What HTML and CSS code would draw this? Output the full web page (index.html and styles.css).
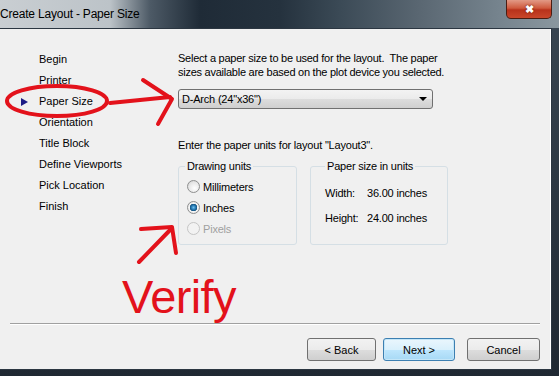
FILE: index.html
```html
<!DOCTYPE html>
<html lang="en">
<head>
  <meta charset="UTF-8">
  <title>Create Layout - Paper Size</title>
  <link rel="stylesheet" href="styles.css">
</head>
<body>
  <div class="window">
    <div class="titlebar">
      <span class="title">Create Layout - Paper Size</span>
      <div class="close">&#10006;</div>
    </div>

    <div class="client">
      <div class="main">
        <ul class="steps">
          <li class="step"><span class="marker"></span>Begin</li>
          <li class="step"><span class="marker"></span>Printer</li>
          <li class="step current"><span class="marker"></span>Paper Size</li>
          <li class="step"><span class="marker"></span>Orientation</li>
          <li class="step"><span class="marker"></span>Title Block</li>
          <li class="step"><span class="marker"></span>Define Viewports</li>
          <li class="step"><span class="marker"></span>Pick Location</li>
          <li class="step"><span class="marker"></span>Finish</li>
        </ul>

        <div class="content">
          <p class="desc">Select a paper size to be used for the layout.&nbsp; The paper<br>sizes available are based on the plot device you selected.</p>

          <div class="combo">
            <span>D-Arch (24"x36")</span>
            <span class="combo-arrow"></span>
          </div>

          <p class="units-text">Enter the paper units for layout "Layout3".</p>

          <div class="groups">
            <fieldset class="group group-units">
              <legend>Drawing units</legend>
              <div class="radio-row"><span class="radio"></span>Millimeters</div>
              <div class="radio-row"><span class="radio checked"></span>Inches</div>
              <div class="radio-row disabled"><span class="radio"></span>Pixels</div>
            </fieldset>
            <fieldset class="group group-size">
              <legend>Paper size in units</legend>
              <div class="size-row"><span class="size-label">Width:</span>36.00 inches</div>
              <div class="size-row"><span class="size-label">Height:</span>24.00 inches</div>
            </fieldset>
          </div>
        </div>
      </div>

      <div class="separator"></div>

      <div class="buttons">
        <button class="btn btn-back">&lt; Back</button>
        <button class="btn btn-next">Next &gt;</button>
        <button class="btn btn-cancel">Cancel</button>
      </div>
    </div>

    <!-- hand drawn markup on top of the screenshot -->
    <svg class="markup" width="559" height="376" viewBox="0 0 559 376">
      <g fill="none" stroke="#e3121b" stroke-width="4" stroke-linecap="round" stroke-linejoin="round">
        <ellipse cx="57" cy="101" rx="50" ry="15"/>
        <path d="M110 103 L170 97"/>
        <path d="M143 80 L172 99 L158 124"/>
        <path d="M139 262 L172 228"/>
        <path d="M141 229 L172 227 L176 253"/>
      </g>
      <text x="122" y="313" class="verify">Verify</text>
    </svg>
  </div>
</body>
</html>
```

FILE: styles.css
```css
body {
  margin: 0;
  font-family: "Liberation Sans", Arial, sans-serif;
  font-size: 11px;
  color: #000;
}
.window {
  position: relative;
  width: 559px;
  height: 376px;
  display: flex;
  flex-direction: column;
  background: linear-gradient(to bottom, #3a4753, #1f2832);
  overflow: hidden;
}
.titlebar {
  height: 28px;
  display: flex;
  align-items: flex-start;
  background: linear-gradient(to right, #c9ced2 0, #bcc3c8 110px, #4d5a66 150px, #1f2b37 200px, #25323e 280px, #3b4a56 340px, #5a6772 420px, #76848e 500px, #8a979f 559px);
}
.title {
  font-size: 12px;
  line-height: 28px;
  letter-spacing: -0.2px;
  padding-right: 12px;
}
.close {
  margin-left: auto;
  margin-right: 7px;
  width: 46px;
  height: 19px;
  box-sizing: border-box;
  border: 1px solid #4a1d12;
  border-top: none;
  border-radius: 0 0 5px 5px;
  background: linear-gradient(to bottom, #e29a86 0, #cf5a3e 45%, #b8321b 55%, #c9462a 100%);
  color: #fff;
  font-size: 11px;
  font-weight: bold;
  text-align: center;
  line-height: 18px;
  text-shadow: 0 0 2px #5a1000;
}
.client {
  flex: 1;
  margin: 0 7px 6px 0;
  background: #f0f0f0;
  border: 1px solid #2b3641;
  border-left: none;
  box-shadow: inset -1px 0 0 #ffffff;
  display: flex;
  flex-direction: column;
}
.main {
  height: 294px;
  display: flex;
}
.steps {
  list-style: none;
  margin: 0;
  padding: 20px 0 0;
  width: 178px;
}
.step {
  height: 21px;
  line-height: 21px;
  display: flex;
  align-items: center;
}
.marker {
  width: 39px;
  flex-shrink: 0;
}
.current .marker::before {
  content: "";
  display: block;
  margin-left: 21px;
  width: 0;
  height: 0;
  border-top: 4px solid transparent;
  border-bottom: 4px solid transparent;
  border-left: 7px solid #1c1c86;
}
.content {
  padding-top: 22px;
  flex: 1;
}
.desc {
  margin: 0;
  line-height: 14px;
  letter-spacing: -0.25px;
}
.combo {
  margin-top: 10px;
  width: 255px;
  height: 20px;
  box-sizing: border-box;
  border: 1px solid #707070;
  border-radius: 3px;
  background: linear-gradient(to bottom, #f3f3f3 0, #ebebeb 50%, #dddddd 51%, #cfcfcf 100%);
  display: flex;
  align-items: center;
  justify-content: space-between;
  padding: 0 5px 0 3px;
  letter-spacing: -0.2px;
}
.combo-arrow {
  width: 0;
  height: 0;
  border-left: 4px solid transparent;
  border-right: 4px solid transparent;
  border-top: 4px solid #000;
}
.units-text {
  margin: 29px 0 0;
  line-height: 14px;
  letter-spacing: -0.2px;
}
.groups {
  display: flex;
  gap: 13px;
  margin-top: 7px;
}
.group {
  margin: 0;
  padding: 0 0 0 6px;
  height: 86px;
  box-sizing: border-box;
  border: 1px solid #d5dfe5;
  border-radius: 3px;
  min-width: 0;
}
.group legend {
  padding: 0 2px;
  line-height: 14px;
  letter-spacing: -0.2px;
}
.group-units {
  width: 119px;
  padding-top: 3px;
}
.group-size {
  width: 138px;
  padding-top: 10px;
  padding-left: 14px;
}
.radio-row {
  height: 21px;
  display: flex;
  align-items: center;
  gap: 3px;
  letter-spacing: -0.2px;
}
.radio-row.disabled {
  color: #a0a0a0;
}
.radio {
  margin-left: 2px;
  width: 13px;
  height: 13px;
  box-sizing: border-box;
  border-radius: 50%;
  border: 1px solid #8e8f8f;
  background: radial-gradient(circle at 60% 65%, #ffffff 0, #e6e6e6 60%, #c8c8c8 100%);
}
.radio.checked {
  background: radial-gradient(circle at 50% 50%, #6cc0ee 0, #1e6ea8 2.5px, #14547f 3.5px, #f4f4f4 4px, #dcdcdc 100%);
}
.disabled .radio {
  border-color: #c5c5c5;
  background: #f2f2f2;
}
.size-row {
  height: 20px;
  line-height: 20px;
  display: flex;
  letter-spacing: -0.2px;
}
.size-row + .size-row {
  margin-top: 5px;
}
.size-label {
  width: 42px;
}
.separator {
  margin: 0 11px 0 10px;
  border-top: 1px solid #a0a0a0;
  border-bottom: 1px solid #ffffff;
}
.buttons {
  display: flex;
  justify-content: flex-end;
  padding: 13px 11px 0 0;
}
.btn {
  height: 23px;
  margin: 0;
  border: 1px solid #707070;
  border-radius: 3px;
  background: linear-gradient(to bottom, #f2f2f2 0, #ebebeb 50%, #dddddd 51%, #cfcfcf 100%);
  font-family: "Liberation Sans", Arial, sans-serif;
  font-size: 11px;
  color: #000;
  padding: 0;
}
.btn-back {
  width: 69px;
}
.btn-next {
  width: 72px;
  margin-left: 7px;
  border-color: #3c7fb1;
  background: linear-gradient(to bottom, #eaf6fd 0, #d9f0fc 50%, #bee6fd 51%, #a7d9f5 100%);
  box-shadow: inset 0 0 0 1px #c4e6f8;
}
.btn-cancel {
  width: 73px;
  margin-left: 12px;
}
.markup {
  position: absolute;
  top: 0;
  left: 0;
  pointer-events: none;
}
.verify {
  font-family: "Liberation Sans", Arial, sans-serif;
  font-size: 47px;
  letter-spacing: -0.6px;
  fill: #e3121b;
}
```
